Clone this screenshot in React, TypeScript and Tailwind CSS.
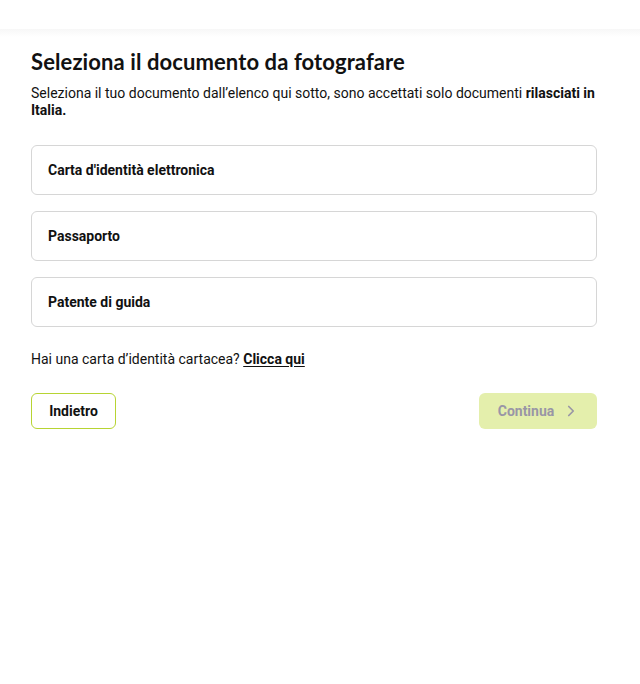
import { ChevronRight } from 'lucide-react';

const DOCS = ["Carta d'identità elettronica", 'Passaporto', 'Patente di guida'];

export default function App() {
  return (
    <div className="min-h-[684px] bg-white font-['Roboto',sans-serif] text-[#111]">
      {/* Header strip */}
      <div className="h-[29px] bg-white" />
      <div className="h-[8px] bg-gradient-to-b from-[#f7f7f7] to-white" />

      <div className="px-[31px] pt-[11px] w-[628px]">
        <h1 className="text-[22px] leading-[28px] font-bold font-['Lato',sans-serif] text-[#111] tracking-[0.1px]">
          Seleziona il documento da fotografare
        </h1>
        <p className="mt-[9px] text-[14px] leading-[17px] text-[#111]">
          Seleziona il tuo documento dall’elenco qui sotto, sono accettati solo documenti{' '}
          <b className="font-bold">rilasciati in Italia.</b>
        </p>

        <div className="mt-[26px] flex flex-col gap-[16px]">
          {DOCS.map((d) => (
            <button
              key={d}
              className="h-[50px] w-full rounded-[6px] border border-[#d6d6d6] bg-white px-[16px] text-left text-[14px] font-bold text-[#111]"
            >
              {d}
            </button>
          ))}
        </div>

        <p className="mt-[24px] text-[14px] leading-[17px]">
          Hai una carta d’identità cartacea?{' '}
          <a className="font-bold underline underline-offset-2">Clicca qui</a>
        </p>

        <div className="mt-[25px] flex items-center justify-between">
          <button className="h-[36px] w-[85px] rounded-[6px] border border-[#b7d433] bg-white text-[14px] font-bold text-[#111]">
            Indietro
          </button>
          <button className="flex h-[36px] w-[118px] items-center justify-center gap-[8px] rounded-[6px] bg-[#e4efac] pl-[2px] text-[14px] font-bold text-[#9996a6]">
            Continua
            <ChevronRight className="h-[18px] w-[18px]" strokeWidth={2.25} />
          </button>
        </div>
      </div>
    </div>
  );
}
